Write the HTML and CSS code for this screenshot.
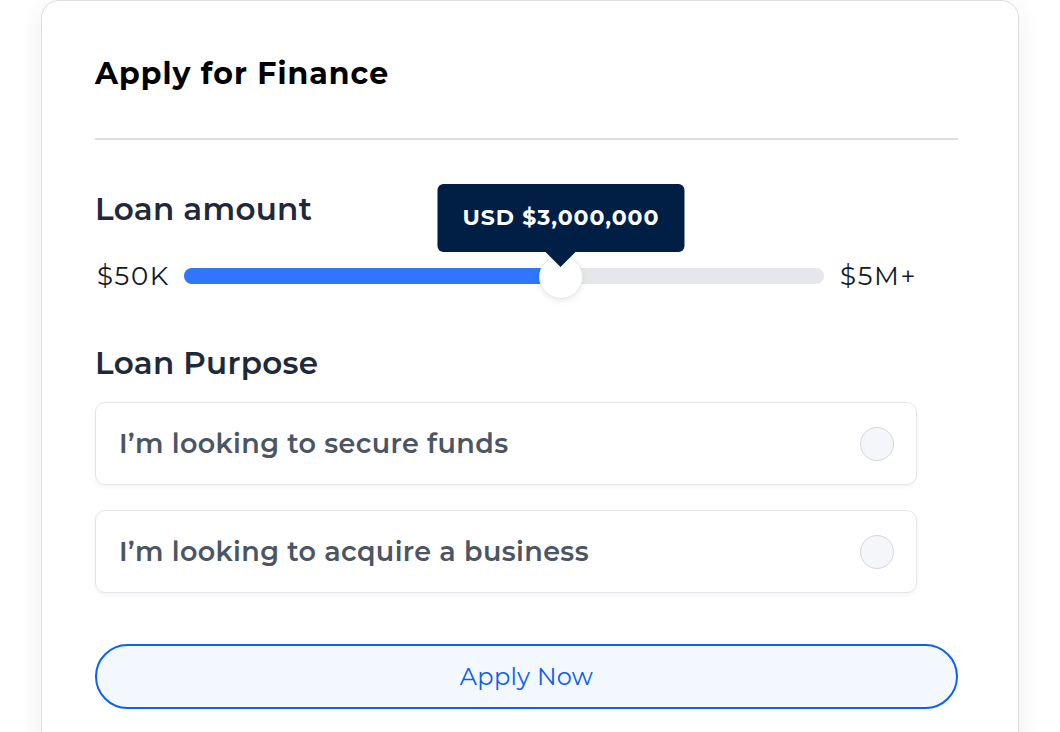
FILE: index.html
```html
<!DOCTYPE html>
<html>
<head>
	<title>Apply for Finance</title>
	<link rel="stylesheet" href="styles.css">
</head>
<body>
	<div class="card">
		<h2 class="card-title">Apply for Finance</h2>
		<hr class="divider">

		<div class="form-body">
			<h3 class="field-label">Loan amount</h3>
			<div class="slider-row">
				<span class="range-end">$50K</span>
				<div class="slider">
					<div class="track">
						<div class="fill" style="width: 58.9%"></div>
					</div>
					<div class="thumb" style="left: 58.9%">
						<div class="tip">USD $3,000,000</div>
					</div>
				</div>
				<span class="range-end">$5M+</span>
			</div>

			<h3 class="field-label purpose">Loan Purpose</h3>
			<label class="option">
				<span class="option-text">I’m looking to secure funds</span>
				<span class="radio"></span>
			</label>
			<label class="option">
				<span class="option-text">I’m looking to acquire a business</span>
				<span class="radio"></span>
			</label>
		</div>

		<button class="apply-btn">Apply Now</button>
	</div>
</body>
</html>
```

FILE: styles.css
```css
body {
	margin: 0;
	padding: 0;
	background: #fff;
	font-family: Montserrat, Inter, "DejaVu Sans", sans-serif;
	overflow: hidden;
}

.card {
	width: 978px;
	box-sizing: border-box;
	margin: 0 auto;
	min-height: 760px;
	padding: 55px 60px 40px 53px;
	border: 1px solid #dedede;
	border-radius: 18px;
	background: #fff;
	box-shadow: 0 6px 28px rgba(0, 0, 0, 0.07);
}

.card-title {
	margin: 0;
	font-size: 30px;
	line-height: 36px;
	font-weight: 700;
	letter-spacing: 1px;
	color: #000;
}

.divider {
	margin: 46px 0 0;
	border: 0;
	height: 2px;
	background: #dddddd;
}

.form-body {
	width: 822px;
	padding-top: 51px;
}

.field-label {
	margin: 0;
	font-size: 31px;
	line-height: 36px;
	font-weight: 600;
	letter-spacing: 0.3px;
	color: #1e293b;
}

.slider-row {
	display: flex;
	align-items: center;
	gap: 14px;
	margin-top: 29px;
	height: 40px;
}

.range-end {
	font-size: 26px;
	letter-spacing: 1.6px;
	color: #111827;
	padding-left: 2px;
}

.slider {
	position: relative;
	flex: 1;
	height: 16px;
}

.track {
	height: 16px;
	border-radius: 8px;
	background: #e5e7eb;
	overflow: hidden;
}

.fill {
	height: 100%;
	background: #2f76fb;
}

.thumb {
	position: absolute;
	top: 50%;
	width: 44px;
	height: 44px;
	margin: -21px 0 0 -22px;
	border-radius: 50%;
	background: #fff;
	border: 1px solid #e5e7eb;
	box-sizing: border-box;
	box-shadow: 0 2px 6px rgba(0, 0, 0, 0.08);
}

.tip {
	position: absolute;
	bottom: 46px;
	left: 50%;
	transform: translateX(-50%);
	padding: 0 25px;
	height: 68px;
	line-height: 68px;
	white-space: nowrap;
	border-radius: 6px;
	background: #011f45;
	color: #fff;
	font-size: 22px;
	font-weight: 700;
	letter-spacing: 1px;
}

.tip::after {
	content: "";
	position: absolute;
	left: 50%;
	top: 100%;
	margin-left: -15px;
	border-left: 15px solid transparent;
	border-right: 15px solid transparent;
	border-top: 15px solid #011f45;
}

.purpose {
	margin-top: 49px;
}

.option {
	display: flex;
	align-items: center;
	justify-content: space-between;
	height: 83px;
	box-sizing: border-box;
	margin-top: 21px;
	padding: 0 22px 0 23px;
	border: 1px solid #e3e5ea;
	border-radius: 10px;
	box-shadow: 0 2px 4px rgba(0, 0, 0, 0.05);
	cursor: pointer;
}

.option + .option {
	margin-top: 25px;
}

.option-text {
	font-size: 27px;
	font-weight: 600;
	letter-spacing: 0.4px;
	color: #4b5563;
}

.radio {
	width: 34px;
	height: 34px;
	box-sizing: border-box;
	border-radius: 50%;
	border: 1px solid #d4d7de;
	background: #f5f6f9;
}

.apply-btn {
	display: block;
	width: 100%;
	height: 65px;
	margin-top: 51px;
	border: 2px solid #0b61f4;
	border-radius: 33px;
	background: #f3f7fe;
	color: #0b5ff3;
	font-family: inherit;
	font-size: 24px;
	letter-spacing: 0.3px;
	cursor: pointer;
}
```
